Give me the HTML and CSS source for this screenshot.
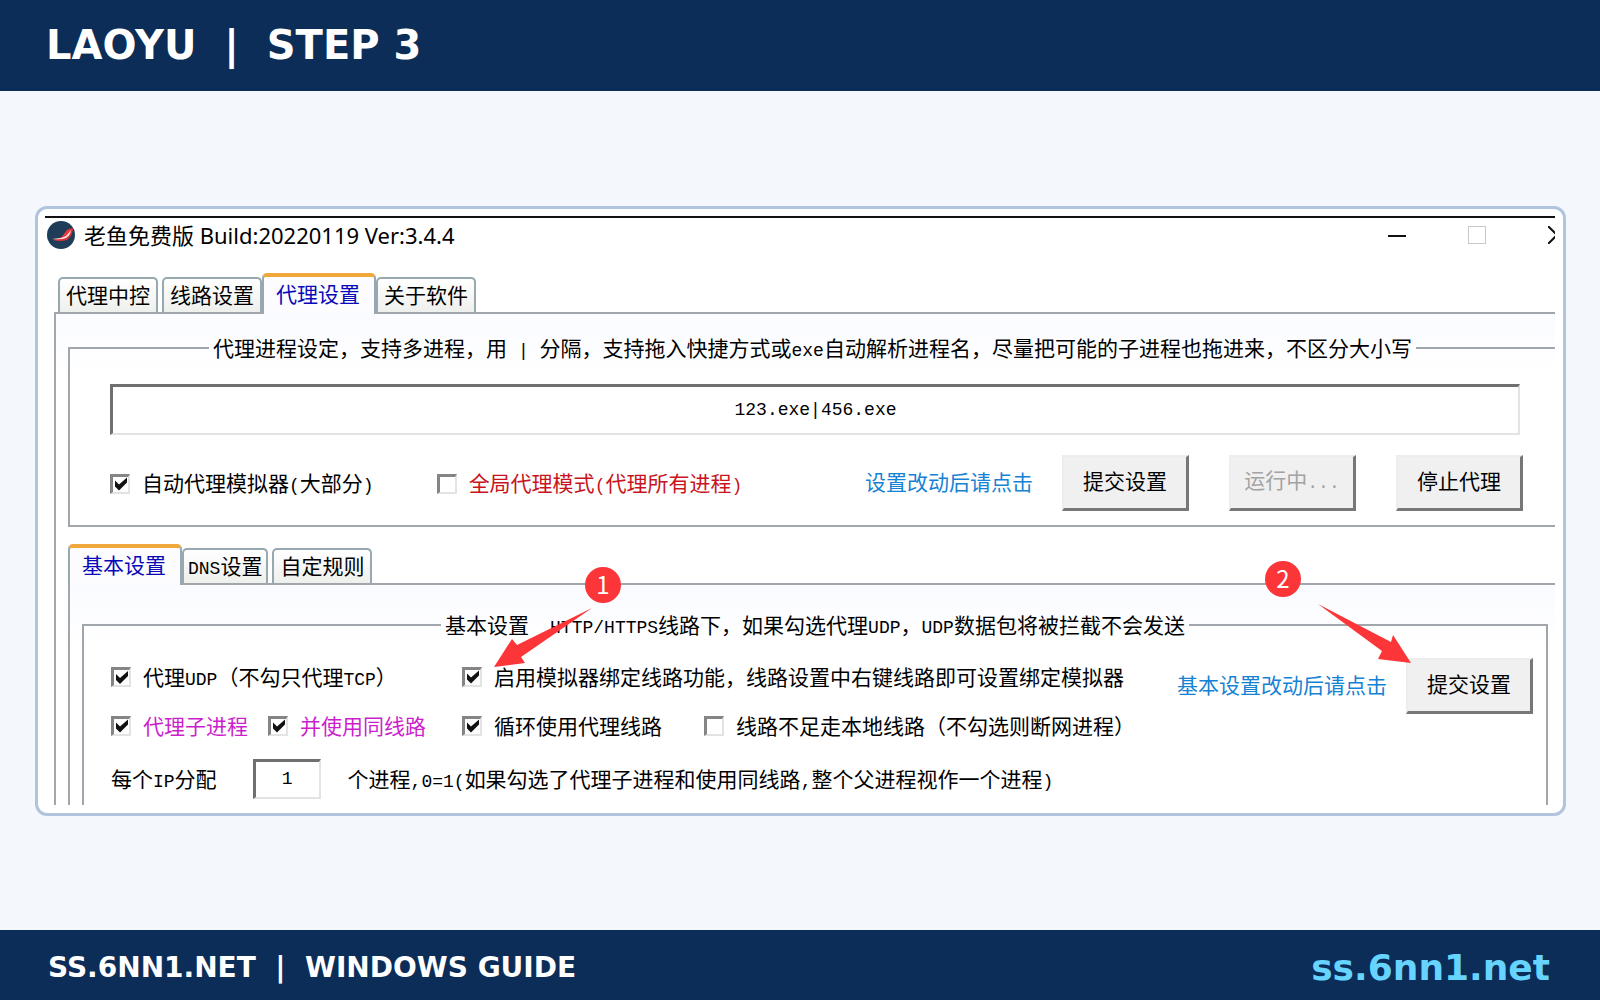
FILE: index.html
```html
<!DOCTYPE html>
<html lang="zh-CN">
<head>
    <meta charset="UTF-8">
    <meta name="viewport" content="width=device-width, initial-scale=1.0">
    <title>LAOYU | STEP 3</title>
    <link rel="stylesheet" href="styles.css">
</head>
<body>
    <header class="page-header">
        <h1>LAOYU&nbsp; |&nbsp; STEP 3</h1>
    </header>

    <main class="page-main">
        <div class="card">
            <div class="window">
                <div class="titlebar">
                    <svg class="app-icon" viewBox="0 0 28 28" aria-hidden="true">
                        <circle cx="14" cy="14" r="14" fill="#1f3c58"/>
                        <path d="M6 19 L15 16 L20 9 L26 7 Q26 14 20 19 Q13 21 6 19 Z" fill="#dc3237"/>
                        <path d="M5 18 L14 17 L21 11 L24 8 Q24 14 19 17 Q14 19 5 18 Z" fill="#fbe4e4"/>
                        <path d="M14 17 L20 9 L26 7 L19 15 Z" fill="#e8383c"/>
                    </svg>
                    <span class="title">老鱼免费版 Build:20220119 Ver:3.4.4</span>
                    <div class="window-buttons">
                        <button type="button" aria-label="最小化"><svg width="18" height="18" viewBox="0 0 18 18"><path d="M0 10H18" stroke="#111" stroke-width="2"/></svg></button>
                        <button type="button" aria-label="最大化"><svg width="18" height="18" viewBox="0 0 18 18"><rect x="0.5" y="0.5" width="17" height="17" fill="none" stroke="#c8c8c8"/></svg></button>
                        <button type="button" aria-label="关闭"><svg width="18" height="18" viewBox="0 0 18 18"><path d="M0 0L18 18M18 0L0 18" stroke="#111" stroke-width="2"/></svg></button>
                    </div>
                </div>

                <div class="tabs main-tabs">
                    <button type="button" class="tab">代理中控</button>
                    <button type="button" class="tab spaced">线路设置</button>
                    <button type="button" class="tab active">代理设置</button>
                    <button type="button" class="tab">关于软件</button>
                </div>

                <div class="panel main-panel">
                    <fieldset class="process">
                        <legend>代理进程设定，支持多进程，用<span class="en"> | </span>分隔，支持拖入快捷方式或<span class="en">exe</span>自动解析进程名，尽量把可能的子进程也拖进来，不区分大小写</legend>
                        <div class="process-body">
                            <input type="text" class="text-box process-list" aria-label="代理进程" value="123.exe|456.exe">
                            <div class="row">
                                <label class="check"><input type="checkbox" checked><span>自动代理模拟器<span class="en">(</span>大部分<span class="en">)</span></span></label>
                                <label class="check red"><input type="checkbox"><span>全局代理模式<span class="en">(</span>代理所有进程<span class="en">)</span></span></label>
                                <span class="hint">设置改动后请点击</span>
                                <div class="buttons">
                                    <button type="button" class="btn">提交设置</button>
                                    <button type="button" class="btn" disabled>运行中<span class="en">...</span></button>
                                    <button type="button" class="btn">停止代理</button>
                                </div>
                            </div>
                        </div>
                    </fieldset>

                    <div class="tabs sub-tabs">
                        <button type="button" class="tab active">基本设置</button>
                        <button type="button" class="tab narrow spaced"><span class="en">DNS</span>设置</button>
                        <button type="button" class="tab">自定规则</button>
                    </div>

                    <div class="panel sub-panel">
                        <fieldset class="basic">
                            <legend>基本设置<span class="en gap">HTTP/HTTPS</span>线路下，如果勾选代理<span class="en">UDP</span>，<span class="en">UDP</span>数据包将被拦截不会发送</legend>
                            <div class="basic-body">
                                <div class="basic-top">
                                    <div class="options">
                                        <div class="option-row">
                                            <div class="first-cell">
                                                <label class="check"><input type="checkbox" checked><span>代理<span class="en">UDP</span>（不勾只代理<span class="en">TCP</span>）</span></label>
                                            </div>
                                            <div class="step">
                                                <label class="check"><input type="checkbox" checked><span>启用模拟器绑定线路功能，线路设置中右键线路即可设置绑定模拟器</span></label>
                                                <svg class="arrow arrow-1" viewBox="0 0 98 60" aria-hidden="true"><path d="M98 0 L23 37 L18 31 L0 59 L31 55 L27 49 Z"/></svg>
                                                <span class="badge badge-1">1</span>
                                            </div>
                                        </div>
                                        <div class="option-row">
                                            <div class="first-cell">
                                                <label class="check purple"><input type="checkbox" checked><span>代理子进程</span></label>
                                                <label class="check purple"><input type="checkbox" checked><span>并使用同线路</span></label>
                                            </div>
                                            <label class="check"><input type="checkbox" checked><span>循环使用代理线路</span></label>
                                            <label class="check local"><input type="checkbox"><span>线路不足走本地线路（不勾选则断网进程）</span></label>
                                        </div>
                                    </div>
                                    <div class="submit">
                                        <span class="hint">基本设置改动后请点击</span>
                                        <div class="step">
                                            <button type="button" class="btn">提交设置</button>
                                            <svg class="arrow arrow-2" viewBox="0 0 93 59" aria-hidden="true"><path d="M0 0 L73 38 L75 31 L93 59 L60 55 L64 47 Z"/></svg>
                                            <span class="badge badge-2">2</span>
                                        </div>
                                    </div>
                                </div>
                                <div class="per-ip">
                                    <label for="perIp">每个<span class="en">IP</span>分配</label>
                                    <input type="text" class="text-box" id="perIp" value="1">
                                    <span>个进程<span class="en">,0=1(</span>如果勾选了代理子进程和使用同线路<span class="en">,</span>整个父进程视作一个进程<span class="en">)</span></span>
                                </div>
                            </div>
                        </fieldset>
                    </div>
                </div>
            </div>
        </div>
    </main>

    <footer class="page-footer">
        <span>SS.6NN1.NET&nbsp; |&nbsp; WINDOWS GUIDE</span>
        <a href="#">ss.6nn1.net</a>
    </footer>
</body>
</html>
```
FILE: styles.css
```css
:root {
    --navy: #0b2d57;
    --page: #f4f7fc;
    --card-border: #b0c4de;
    --line: #a0a6ab;
    --red: #fb3538;
    --cjk: "Noto Sans CJK SC", sans-serif;
}

* {
    box-sizing: border-box;
}

body {
    margin: 0;
    min-height: 100vh;
    display: flex;
    flex-direction: column;
    background: var(--page);
    font-family: "DejaVu Sans", sans-serif;
}

.page-header {
    display: flex;
    align-items: center;
    height: 91px;
    padding: 0 46px 2px;
    background: var(--navy);
    color: white;
}

.page-header h1 {
    margin: 0;
    font-size: 40px;
    font-weight: bold;
}

.page-main {
    flex: 1;
    display: flex;
    flex-direction: column;
    justify-content: center;
    padding: 20px 34px 20px 35px;
}

.page-footer {
    display: flex;
    align-items: center;
    justify-content: space-between;
    height: 70px;
    padding: 5px 50px 0 48px;
    background: var(--navy);
    color: white;
    font-size: 28px;
    font-weight: bold;
}

.page-footer a {
    color: #66d4ff;
    font-size: 36px;
    text-decoration: none;
}

.card {
    padding: 7px 8px 8px 7px;
    background: white;
    border: 3px solid var(--card-border);
    border-radius: 12px;
}

.window {
    overflow: hidden;
    background: white;
    color: #000;
    font-family: var(--cjk);
    font-size: 21px;
    line-height: 24px;
    white-space: nowrap;
}

.window button,
.window input {
    font: inherit;
    color: inherit;
}

/* half-width latin text */
.en {
    font-family: "Liberation Mono", monospace;
    font-size: 18px;
    line-height: 1;
    white-space: pre;
}

.en.gap {
    margin-left: 21px;
}

.titlebar {
    display: flex;
    align-items: center;
    height: 37px;
    margin-bottom: 20px;
    padding-left: 2px;
    border-top: 2px solid #111;
}

.app-icon {
    width: 28px;
    height: 28px;
    margin-right: 9px;
}

.title {
    font-family: "Noto Sans", "Noto Sans CJK SC", sans-serif;
    font-size: 22px;
}

.window-buttons {
    display: flex;
    gap: 62px;
    margin-left: auto;
    margin-right: -11px;
}

.window-buttons button {
    display: flex;
    padding: 0;
    border: none;
    background: none;
}

/* tabs */
.tabs {
    display: flex;
    align-items: flex-end;
    height: 39px;
}

.main-tabs {
    padding-left: 13px;
}

.sub-tabs {
    margin-top: 17px;
    padding-left: 12px;
}

.tab {
    height: 35px;
    padding: 0 6px 2px;
    border: 2px solid #97a8b1;
    border-bottom: none;
    border-radius: 5px 5px 0 0;
    background: linear-gradient(#fff, #eef0ec);
}

.tab.spaced {
    margin-left: 4px;
}

.sub-tabs .tab.spaced {
    margin: 0 4px 0 0;
}

.tab.narrow {
    padding: 0 4px 2px;
}

.window .tab.active {
    position: relative;
    height: 41px;
    margin-bottom: -2px;
    padding: 0 14px 5px 12px;
    border-top: 4px solid #f0a83a;
    background: #fcfcff;
    color: #0808b8;
}

.panel {
    border-top: 2px solid var(--line);
    border-left: 2px solid var(--line);
    background: linear-gradient(#fafbff, #fff 60px);
}

.main-panel {
    margin-left: 9px;
}

.sub-panel {
    margin-left: 12px;
}

fieldset {
    min-width: 0;
    margin: 0;
    padding: 0;
    border: 2px solid var(--line);
}

legend {
    margin: 0 auto;
    padding: 0 4px 2px;
}

.process {
    margin: 21px 0 0 12px;
    border-right: none;
}

.process-body {
    padding: 22px 35px 14px 40px;
}

.text-box {
    border: 3px solid #707070;
    border-right: 2px solid #e3e3e3;
    border-bottom: 2px solid #e3e3e3;
    background: white;
    text-align: center;
}

.window .text-box {
    font-family: "Liberation Mono", monospace;
    font-size: 18px;
}

.process-list {
    display: block;
    width: 100%;
    height: 51px;
    margin-bottom: 20px;
}

.row {
    display: flex;
    align-items: center;
    margin-right: -3px;
}

.row .red {
    margin-left: 63px;
}

.row .hint {
    margin-left: auto;
    margin-right: 29px;
}

.buttons {
    display: flex;
    gap: 40px;
}

.btn {
    width: 127px;
    height: 56px;
    padding: 0 0 5px;
    border: 2px solid #ededed;
    border-right: 3px solid #777;
    border-bottom: 3px solid #777;
    background: #f0f0f0;
}

.window .btn:disabled {
    color: #a3a3a3;
}

.hint {
    padding-bottom: 4px;
    color: #1682d4;
}

.check {
    display: flex;
    align-items: center;
    gap: 12px;
}

.check input {
    appearance: none;
    flex: none;
    width: 20px;
    height: 20px;
    margin: 2px 0 0;
    border: 3px solid #858585;
    border-right: 2px solid #e3e3e3;
    border-bottom: 2px solid #e3e3e3;
    background: white;
}

.check input:checked::after {
    content: "";
    display: block;
    height: 15px;
    background: #111;
    clip-path: polygon(2px 4px, 6px 8px, 14px 1px, 14px 6px, 6px 14px, 2px 10px);
}

.red {
    color: #c8141c;
}

.purple {
    color: #cc1fcc;
}

.basic {
    margin: 27px 7px 0 12px;
    border-bottom: none;
}

.basic-body {
    padding: 19px 13px 6px 27px;
}

.basic-top {
    display: flex;
    align-items: flex-start;
    justify-content: space-between;
}

.options {
    display: flex;
    flex-direction: column;
    gap: 24px;
    margin-top: 6px;
}

.option-row {
    display: flex;
}

.first-cell {
    display: flex;
    gap: 20px;
    width: 351px;
}

.local {
    margin-left: 42px;
}

.submit {
    display: flex;
    align-items: center;
    gap: 19px;
}

.per-ip {
    display: flex;
    align-items: center;
    margin-top: 22px;
}

.per-ip .text-box {
    width: 68px;
    height: 40px;
    margin: 0 27px 0 36px;
}

/* numbered markers over the form */
.step {
    position: relative;
}

.arrow {
    position: absolute;
    fill: var(--red);
}

.arrow-1 {
    left: 32px;
    top: -56px;
    width: 98px;
    height: 60px;
}

.arrow-2 {
    right: 122px;
    top: -54px;
    width: 93px;
    height: 59px;
}

.badge {
    position: absolute;
    width: 36px;
    height: 36px;
    border-radius: 50%;
    background: var(--red);
    color: white;
    font-size: 24px;
    line-height: 34px;
    text-align: center;
}

.badge-1 {
    left: 123px;
    top: -97px;
}

.badge-2 {
    right: 232px;
    top: -97px;
}
```
